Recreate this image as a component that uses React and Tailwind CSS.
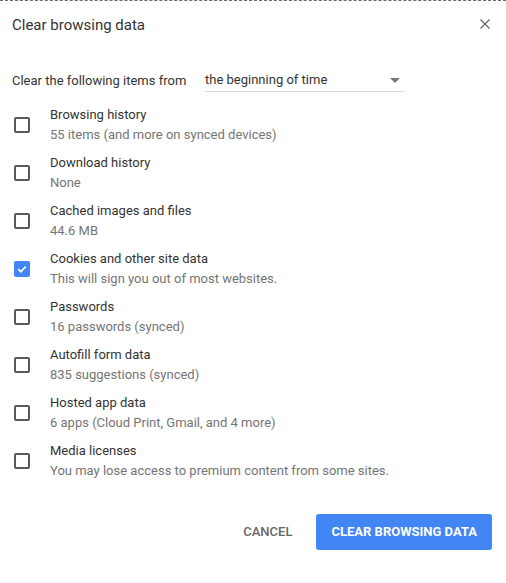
const items = [
  { title: "Browsing history", sub: "55 items (and more on synced devices)", checked: false },
  { title: "Download history", sub: "None", checked: false },
  { title: "Cached images and files", sub: "44.6 MB", checked: false },
  { title: "Cookies and other site data", sub: "This will sign you out of most websites.", checked: true },
  { title: "Passwords", sub: "16 passwords (synced)", checked: false },
  { title: "Autofill form data", sub: "835 suggestions (synced)", checked: false },
  { title: "Hosted app data", sub: "6 apps (Cloud Print, Gmail, and 4 more)", checked: false },
  { title: "Media licenses", sub: "You may lose access to premium content from some sites.", checked: false },
];

const Checkbox = ({ checked }) =>
  checked ? (
    <div className="w-4 h-4 rounded-[2px] bg-[#4285f4] flex items-center justify-center">
      <svg width="12" height="12" viewBox="0 0 12 12" fill="none">
        <path d="M2.2 6.2 L4.8 8.7 L9.8 3.5" stroke="white" strokeWidth="1.8" />
      </svg>
    </div>
  ) : (
    <div className="w-4 h-4 rounded-[2px] border-2 border-[#5a5a5a]" />
  );

export default function App() {
  return (
    <div
      className="w-[506px] h-[583px] bg-white border-t border-dashed border-[#6b6b6b] text-[#333] overflow-hidden"
      style={{ fontFamily: "Roboto, 'Liberation Sans', sans-serif" }}
    >
      <div className="flex items-center justify-between pl-3 pr-4 pt-[13px] h-[34px]">
        <div className="text-[15px] leading-5">Clear browsing data</div>
        <svg width="10" height="10" viewBox="0 0 10 10" className="mt-[-2px]">
          <path d="M0.5 0.5 L9.5 9.5 M9.5 0.5 L0.5 9.5" stroke="#666" strokeWidth="1.2" />
        </svg>
      </div>

      <div className="flex items-center pl-3 mt-[36px] h-5">
        <div className="text-[13px] w-[193px]">Clear the following items from</div>
        <div className="w-[200px] h-5 flex items-start justify-between border-b border-[#d9d9d9] pr-[5px] mt-[1px]">
          <span className="text-[13px] leading-4">the beginning of time</span>
          <svg width="10" height="5" viewBox="0 0 10 5" className="mt-[6px]">
            <path d="M0 0 L10 0 L5 5 Z" fill="#777" />
          </svg>
        </div>
      </div>

      <div className="mt-[14px] flex flex-col gap-[9px]">
        {items.map((it) => (
          <div key={it.title} className="flex items-center pl-[14px]">
            <div className="w-9">
              <Checkbox checked={it.checked} />
            </div>
            <div className="text-[13px] leading-[19px]">
              <div className="text-[#333]">{it.title}</div>
              <div className="text-[#757575] mt-px">{it.sub}</div>
            </div>
          </div>
        ))}
      </div>

      <div className="flex justify-end items-center gap-[24px] pr-[14px] mt-[34px]">
        <button className="text-[13px] font-medium text-[#666]">CANCEL</button>
        <button className="h-9 px-[15px] rounded-[3px] bg-[#4285f4] text-white text-[13px] font-bold">
          CLEAR BROWSING DATA
        </button>
      </div>
    </div>
  );
}
